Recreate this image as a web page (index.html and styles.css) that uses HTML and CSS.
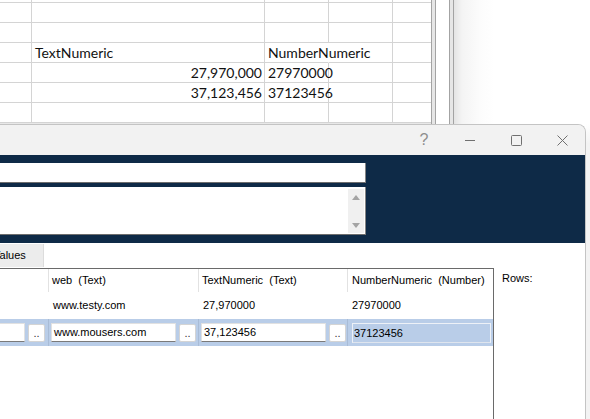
FILE: index.html
```html
<!DOCTYPE html>
<html>
<head>
<meta charset="utf-8">
<title>Values</title>
<link rel="stylesheet" href="styles.css">
</head>
<body>
<div class="screen">
  <div class="excel">
    <div class="sheet">
      <div class="c"></div><div class="c"></div><div class="c"></div><div class="c"></div><div class="c e"></div>
      <div class="c"></div><div class="c"></div><div class="c"></div><div class="c"></div><div class="c e"></div>
      <div class="c"></div><div class="c"></div><div class="c"></div><div class="c"></div><div class="c e"></div>
      <div class="c"></div><div class="c">TextNumeric</div><div class="c over">NumberNumeric</div><div class="c"></div><div class="c e"></div>
      <div class="c"></div><div class="c r">27,970,000</div><div class="c">27970000</div><div class="c"></div><div class="c e"></div>
      <div class="c"></div><div class="c r">37,123,456</div><div class="c">37123456</div><div class="c"></div><div class="c e"></div>
      <div class="c"></div><div class="c"></div><div class="c"></div><div class="c"></div><div class="c e"></div>
      <div class="foot"></div>
    </div>
    <div class="splitbar"></div>
    <div class="gap"></div>
    <div class="splitbar"></div>
    <div class="desk"></div>
  </div>

  <div class="lower">
    <div class="window">
      <div class="titlebar">
        <div class="tbtn"><span class="help">?</span></div>
        <div class="tbtn">
          <svg width="10" height="10" viewBox="0 0 10 10"><path d="M0 5.5H10" stroke="currentColor" stroke-width="1"/></svg>
        </div>
        <div class="tbtn">
          <svg width="11" height="11" viewBox="0 0 11 11"><rect x="0.5" y="0.5" width="10" height="10" rx="1" fill="none" stroke="currentColor" stroke-width="1"/></svg>
        </div>
        <div class="tbtn">
          <svg width="11" height="11" viewBox="0 0 11 11"><path d="M0.5 0.5L10.5 10.5M10.5 0.5L0.5 10.5" stroke="currentColor" stroke-width="1"/></svg>
        </div>
      </div>

      <div class="navy">
        <div class="field"></div>
        <div class="memo">
          <div class="vscroll">
            <span class="arrow up"></span>
            <span class="arrow down"></span>
          </div>
        </div>
      </div>

      <div class="content">
        <div class="tabs"><div class="tab">Values</div></div>
        <div class="main">
          <div class="grid">
            <div class="gr head">
              <div class="hc"></div>
              <div class="hc">web  (Text)</div>
              <div class="hc">TextNumeric  (Text)</div>
              <div class="hc last">NumberNumeric  (Number)</div>
            </div>
            <div class="gr data">
              <div class="dc"></div>
              <div class="dc">www.testy.com</div>
              <div class="dc">27,970000</div>
              <div class="dc">27970000</div>
            </div>
            <div class="gr sel">
              <div class="ec first"><div class="tb wide"></div><div class="btn">..</div></div>
              <div class="ec"><div class="tb">www.mousers.com</div><div class="btn">..</div></div>
              <div class="ec"><div class="tb">37,123456</div><div class="btn">..</div></div>
              <div class="ec last"><div class="selbox">37123456</div></div>
            </div>
          </div>
          <div class="rows-label">Rows:</div>
        </div>
      </div>
    </div>
    <div class="outside"></div>
  </div>
</div>
</body>
</html>
```

FILE: styles.css
```css
* { box-sizing: border-box; margin: 0; padding: 0; }
html, body { width: 590px; height: 419px; overflow: hidden; background: #fff; }
body { font-family: "Liberation Sans", Arial, sans-serif; font-size: 11px; color: #000; }

.screen { display: flex; flex-direction: column; width: 590px; height: 419px; }

/* spreadsheet behind */
.excel { display: flex; height: 124px; flex: none; background: #fff; }
.sheet {
  display: grid;
  grid-template-columns: 32px 233px 64px 64px 38px;
  grid-template-rows: 3px repeat(6, 20px) 1px;
  width: 431px;
  font-family: Lato, "Liberation Sans", sans-serif;
  font-size: 14px;
  color: #111;
}
.sheet .c {
  border-right: 1px solid #d4d4d4;
  border-bottom: 1px solid #d4d4d4;
  padding: 1px 2px 0 3px;
  line-height: 18px;
  white-space: nowrap;
}
.sheet .c.e { border-right: none; }
.sheet .c.over { border-right-color: transparent; }
.sheet .c.r { text-align: right; padding-right: 2px; }
.sheet .foot { grid-column: 1 / -1; background: #e8e8e8; }
.splitbar { width: 5px; border-left: 1px solid #a3a3a3; border-right: 1px solid #a3a3a3; background: #e6e6e6; }
.gap { width: 13px; }
.desk { flex: 1; background: linear-gradient(to right, #e4e4e4 0, #f4f4f4 8px, #fcfcfc 26px, #fff 40px); }

/* dialog window */
.lower { flex: 1; display: flex; min-height: 0; background: #fff; }
.window {
  width: 586px;
  flex: none;
  display: flex;
  flex-direction: column;
  border-top: 1px solid #c4c4c4;
  border-right: 1px solid #c4c4c4;
  border-top-right-radius: 8px;
  background: #f2f2f2;
  overflow: hidden;
}
.outside { flex: 1; background: linear-gradient(to bottom, #fff 0, #f3f3f3 20px); }

.titlebar { height: 30px; flex: none; display: flex; justify-content: flex-end; background: #f2f2f2; }
.tbtn { width: 46px; display: flex; align-items: center; justify-content: center; color: #707070; }
.help { font-size: 16px; line-height: 16px; color: #8e8e8e; font-family: "Liberation Sans", sans-serif; }

.navy { height: 88px; flex: none; background: #0e2a47; padding: 8px 0; }
.field {
  height: 20px; width: 376px; margin-left: -10px;
  background: #fff;
  border-right: 1px solid #858585;
  border-bottom: 1px solid #6e6e6e;
}
.memo {
  height: 48px; width: 376px; margin-left: -10px; margin-top: 4px;
  background: #fff;
  border-right: 1px solid #858585;
  border-bottom: 1px solid #6e6e6e;
  display: flex; justify-content: flex-end;
  padding: 2px 1px 1px 0;
}
.vscroll {
  width: 16px; background: #f0f0f0;
  display: flex; flex-direction: column; justify-content: space-between; align-items: center;
  padding: 6px 0 5px;
}
.arrow { width: 0; height: 0; border-left: 4px solid transparent; border-right: 4px solid transparent; }
.arrow.up { border-bottom: 5px solid #a4a4a4; }
.arrow.down { border-top: 5px solid #a4a4a4; }

.content { flex: 1; background: #fff; display: flex; flex-direction: column; min-height: 0; }
.tabs { height: 25px; flex: none; padding-top: 1px; }
.tab {
  width: 54px; height: 23px; margin-left: -10px;
  background: #ececec;
  border-right: 1px solid #dcdcdc;
  padding-left: 3px;
  line-height: 23px;
  font-size: 11px;
}

.main { flex: 1; display: flex; min-height: 0; }
.grid {
  width: 494px; flex: none;
  border-top: 1px solid #6a6a6a;
  border-right: 1px solid #6a6a6a;
  display: flex; flex-direction: column;
}
.gr { display: grid; grid-template-columns: 49px 150px 149px 145px; }
.head { height: 23px; }
.hc { border-right: 1px solid #e2e2e2; padding-left: 3px; line-height: 22px; white-space: pre; }
.hc.last { border-right: none; padding-left: 4px; }
.data { height: 27px; }
.dc { padding-left: 4px; line-height: 27px; white-space: nowrap; }
.sel { height: 27px; background: #b9cde8; }
.ec {
  border-right: 1px solid #a9bcd6;
  display: flex; align-items: center; gap: 3px;
  padding: 0 3px 0 2px;
}
.ec.last { border-right: none; padding: 0 2px 0 4px; }
.tb {
  width: 125px; height: 19px; flex: none;
  background: #fff;
  border: 1px solid #e1e1e1;
  border-bottom-color: #7a7a7a;
  padding-left: 2px;
  line-height: 17px;
  white-space: nowrap; overflow: hidden;
}
.tb.wide { flex: 1; width: auto; margin-left: -20px; }
.btn {
  width: 17px; height: 18px; flex: none;
  background: #fff;
  border: 1px solid #d4d4d4;
  border-radius: 2px;
  text-align: center;
  line-height: 16px;
  color: #333;
}
.selbox {
  flex: 1; height: 20px;
  background: #b9cde8;
  border: 1px solid #edf1f7;
  border-bottom-color: #dfe5ee;
  padding-left: 1px;
  line-height: 18px;
}
.rows-label { margin-left: 8px; padding-top: 3px; line-height: 14px; }
```
